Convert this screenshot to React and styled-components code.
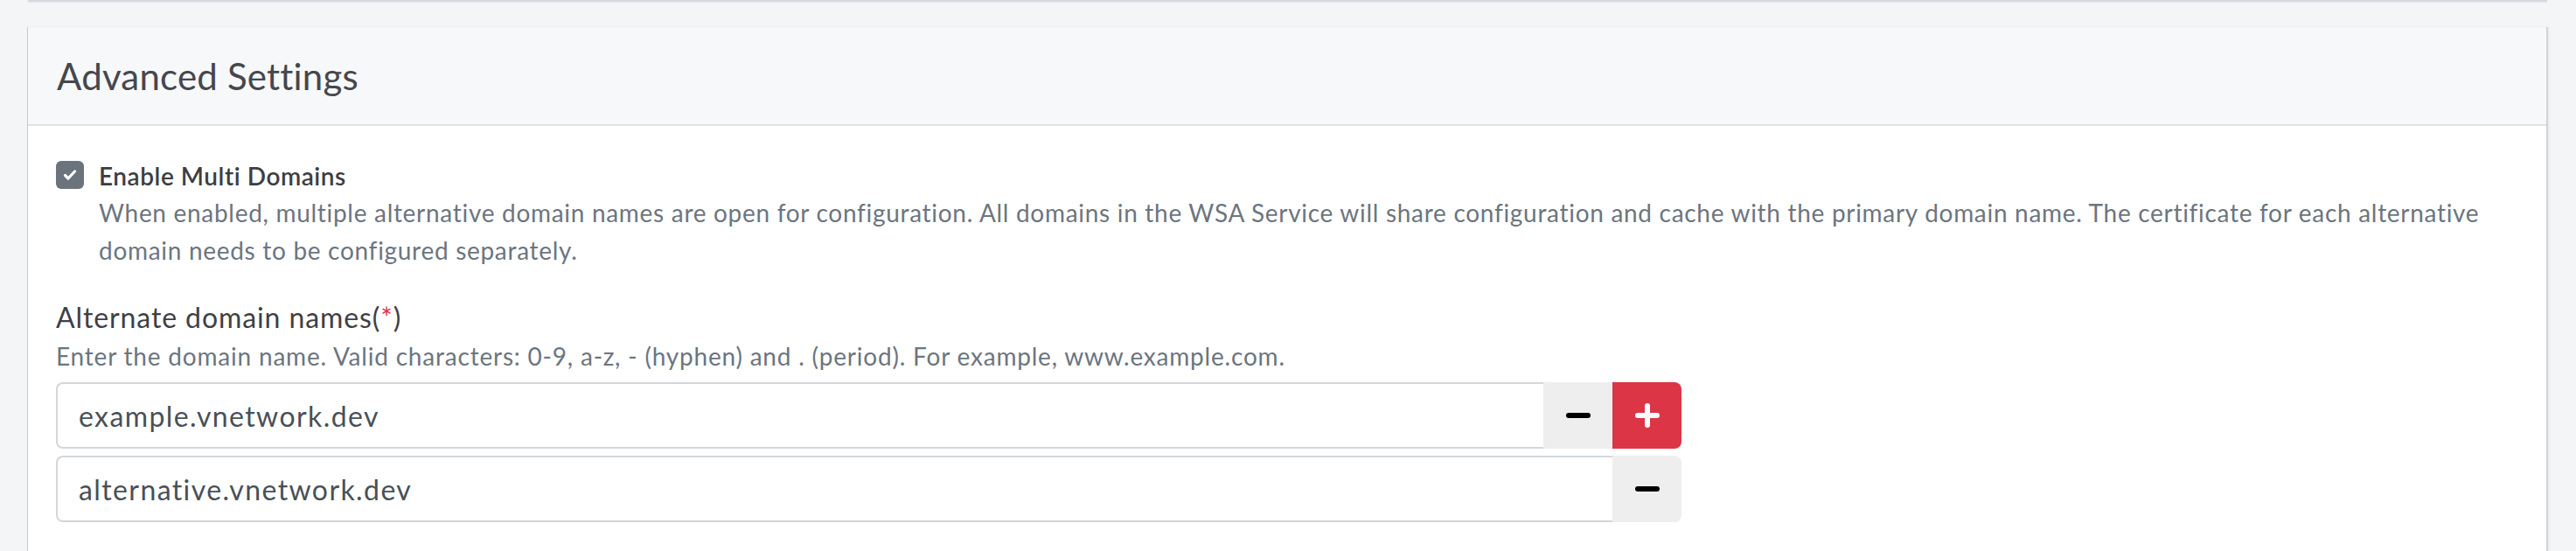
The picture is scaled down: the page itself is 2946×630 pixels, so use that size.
import React from "react";
import styled, { createGlobalStyle } from "styled-components";

const GlobalStyle = createGlobalStyle`
  html, body { margin: 0; padding: 0; }
  body {
    background: #f4f5f7;
    font-family: Lato, "Open Sans", sans-serif;
    -webkit-font-smoothing: antialiased;
  }
  * { box-sizing: border-box; }
`;

const Page = styled.div`
  padding: 0 32px 40px 31px;
  min-height: 630px;
`;

const PrevCardEdge = styled.div`
  height: 2px;
  margin: 0 1px 0 1px;
  background: #fff;
  border-bottom: 2px solid #d6d9dd;
  box-shadow: 0 1px 2px rgba(0, 0, 0, 0.06);
`;

const Card = styled.section`
  margin-top: 29px;
  background: #fff;
  border-left: 1px solid #c6cbd0;
  border-right: 2px solid #cfd4d8;
  box-shadow: 1px 0 3px rgba(0, 0, 0, 0.05);
`;

const CardHeader = styled.header`
  height: 113px;
  display: flex;
  align-items: center;
  padding: 0 33px;
  background: #f7f8fa;
  border-bottom: 2px solid #dfe2e6;
`;

const Title = styled.h4`
  margin: 0;
  font-size: 42px;
  font-weight: 400;
  color: #46474c;
  letter-spacing: 0.2px;
`;

const CardBody = styled.div`
  padding: 36px 32px 40px 32px;
`;

const CheckRow = styled.div`
  display: flex;
  align-items: flex-start;
  gap: 17px;
`;

const CheckBox = styled.span`
  flex: 0 0 32px;
  width: 32px;
  height: 32px;
  margin-top: 4px;
  border-radius: 6px;
  background: #6b737d;
  display: flex;
  align-items: center;
  justify-content: center;
`;

const CheckText = styled.div`
  display: flex;
  flex-direction: column;
`;

const CheckLabel = styled.label`
  font-size: 28px;
  line-height: 42px;
  font-weight: 600;
  letter-spacing: 0.55px;
  color: #3d3e43;
`;

const Description = styled.p`
  margin: 0;
  font-size: 28px;
  line-height: 43px;
  letter-spacing: 0.7px;
  color: #6c757f;
`;

const FormGroup = styled.div`
  margin-top: 31px;
  width: 1859px;
`;

const FieldLabel = styled.label`
  display: block;
  font-size: 32px;
  line-height: 48px;
  letter-spacing: 0.9px;
  color: #3f4045;
`;

const Required = styled.span`
  color: #dc3545;
`;

const HelpText = styled.p`
  margin: 0 0 9px 0;
  font-size: 28px;
  line-height: 41px;
  letter-spacing: 0.8px;
  color: #6c757f;
`;

const InputGroup = styled.div`
  display: flex;
  height: 76px;
  & + & {
    margin-top: 8px;
  }
`;

const TextInput = styled.input`
  flex: 1 1 auto;
  min-width: 0;
  height: 100%;
  padding: 0 24px;
  font-family: inherit;
  font-size: 32px;
  letter-spacing: 1.4px;
  color: #495057;
  background: #fff;
  border: 2px solid #d3d7dc;
  border-right: none;
  border-radius: 8px 0 0 8px;
  outline: none;
`;

const IconButton = styled.button`
  flex: 0 0 79px;
  width: 79px;
  height: 100%;
  padding: 0;
  border: none;
  display: flex;
  align-items: center;
  justify-content: center;
  background: ${(p) => (p.$variant === "danger" ? "#dc3545" : "#eeeeee")};
  color: ${(p) => (p.$variant === "danger" ? "#ffffff" : "#000000")};
  border-radius: ${(p) => (p.$last ? "0 8px 8px 0" : "0")};
  cursor: pointer;
`;

const MinusIcon = () => (
  <svg width="28" height="28" viewBox="0 0 28 28">
    <line x1="3" y1="14" x2="25" y2="14" stroke="currentColor" strokeWidth="6" strokeLinecap="round" />
  </svg>
);

const PlusIcon = () => (
  <svg width="28" height="28" viewBox="0 0 28 28">
    <line x1="3" y1="14" x2="25" y2="14" stroke="currentColor" strokeWidth="6" strokeLinecap="round" />
    <line x1="14" y1="3" x2="14" y2="25" stroke="currentColor" strokeWidth="6" strokeLinecap="round" />
  </svg>
);

const CheckIcon = () => (
  <svg width="16" height="14" viewBox="0 0 16 14">
    <polyline points="2.5,7.5 6,11 13.5,3" fill="none" stroke="#fff" strokeWidth="3.2" strokeLinecap="round" strokeLinejoin="round" />
  </svg>
);

const domains = [
  { value: "example.vnetwork.dev", add: true },
  { value: "alternative.vnetwork.dev", add: false },
];

export default function App() {
  return (
    <>
      <GlobalStyle />
      <Page>
        <PrevCardEdge />
        <Card>
          <CardHeader>
            <Title>Advanced Settings</Title>
          </CardHeader>
          <CardBody>
            <CheckRow>
              <CheckBox>
                <CheckIcon />
              </CheckBox>
              <CheckText>
                <CheckLabel>Enable Multi Domains</CheckLabel>
                <Description>
                  When enabled, multiple alternative domain names are open for configuration. All domains in the WSA
                  Service will share configuration and cache with the primary domain name. The certificate for each
                  alternative domain needs to be configured separately.
                </Description>
              </CheckText>
            </CheckRow>
            <FormGroup>
              <FieldLabel>
                Alternate domain names(<Required>*</Required>)
              </FieldLabel>
              <HelpText>
                Enter the domain name. Valid characters: 0-9, a-z, - (hyphen) and . (period). For example,
                www.example.com.
              </HelpText>
              {domains.map((d) => (
                <InputGroup key={d.value}>
                  <TextInput defaultValue={d.value} />
                  <IconButton $last={!d.add}>
                    <MinusIcon />
                  </IconButton>
                  {d.add && (
                    <IconButton $variant="danger" $last>
                      <PlusIcon />
                    </IconButton>
                  )}
                </InputGroup>
              ))}
            </FormGroup>
          </CardBody>
        </Card>
      </Page>
    </>
  );
}
